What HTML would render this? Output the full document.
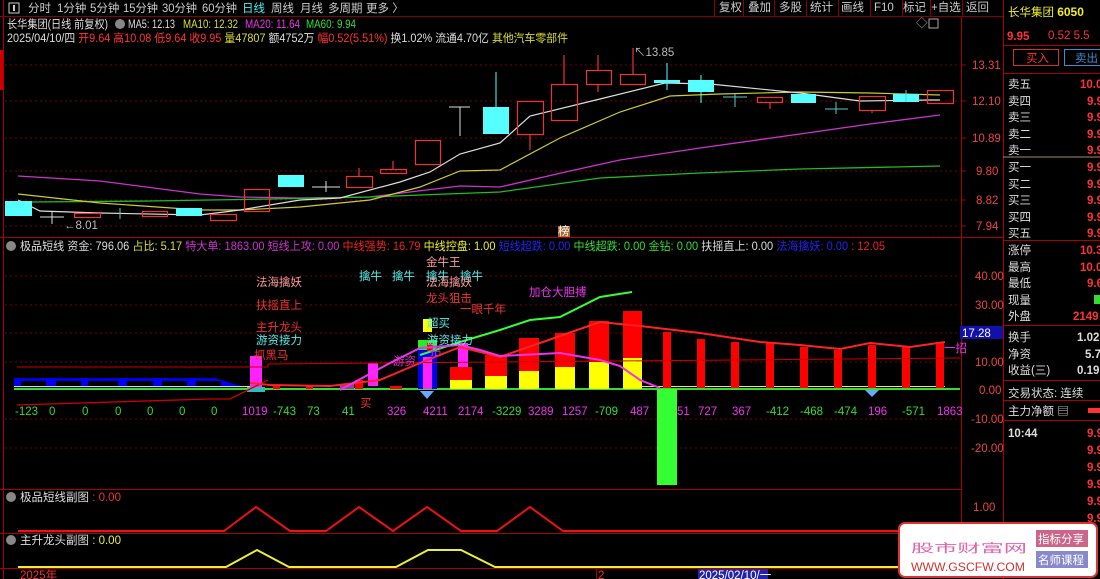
<!DOCTYPE html>
<html><head><meta charset="utf-8"><style>
html,body{margin:0;padding:0;background:#000;width:1100px;height:579px;overflow:hidden}
svg{display:block}
text{font-family:"Liberation Sans","Noto Sans CJK SC",sans-serif;font-size:11.5px}
</style></head><body>
<svg width="1100" height="579" viewBox="0 0 1100 579" xmlns="http://www.w3.org/2000/svg">
<rect width="1100" height="579" fill="#000"/>
<line x1="3.5" y1="0" x2="3.5" y2="579" stroke="#a00" />
<rect x="0" y="50" width="3" height="40" fill="#c00"/>
<line x1="0" y1="16.5" x2="1003" y2="16.5" stroke="#800"/>
<rect x="9" y="3" width="10" height="10" fill="none" stroke="#ccc"/><rect x="13" y="5" width="2" height="6" fill="#ccc"/>
<g font-size="11" fill="#ccc"><text x="28" y="12">分时</text><text x="57" y="12">1分钟</text><text x="90" y="12">5分钟</text><text x="123" y="12" textLength="35" lengthAdjust="spacingAndGlyphs">15分钟</text><text x="162" y="12" textLength="35" lengthAdjust="spacingAndGlyphs">30分钟</text><text x="202" y="12" textLength="35" lengthAdjust="spacingAndGlyphs">60分钟</text><text x="242" y="12" fill="#4ee">日线</text><text x="271" y="12">周线</text><text x="300" y="12">月线</text><text x="328" y="12">多周期</text><text x="366" y="12">更多 〉</text></g>
<g fill="#ccc" font-size="11"><text x="719" y="11">复权</text><text x="748" y="11">叠加</text><text x="779" y="11">多股</text><text x="810" y="11">统计</text><text x="841" y="11">画线</text><text x="874" y="11">F10</text><text x="903" y="11">标记</text><text x="931" y="11">+自选</text><text x="966" y="11">返回</text></g>
<g stroke="#800"><line x1="714.5" y1="0" x2="714.5" y2="16"/><line x1="743.5" y1="0" x2="743.5" y2="16"/><line x1="774.5" y1="0" x2="774.5" y2="16"/><line x1="806.5" y1="0" x2="806.5" y2="16"/><line x1="838.5" y1="0" x2="838.5" y2="16"/><line x1="870.5" y1="0" x2="870.5" y2="16"/><line x1="902.5" y1="0" x2="902.5" y2="16"/><line x1="930.5" y1="0" x2="930.5" y2="16"/><line x1="962.5" y1="0" x2="962.5" y2="16"/></g>
<text x="916" y="27" fill="#aaa" font-size="10">◇</text><rect x="929" y="19" width="9" height="9" fill="none" stroke="#aaa"/>
<text x="7" y="28" fill="#ddd" textLength="101" lengthAdjust="spacingAndGlyphs">长华集团(日线 前复权)</text><circle cx="120" cy="24" r="5" fill="#888"/>
<g font-size="11"><text x="128" y="28" fill="#ddd" textLength="47" lengthAdjust="spacingAndGlyphs">MA5: 12.13</text><text x="183" y="28" fill="#dd3" textLength="55" lengthAdjust="spacingAndGlyphs">MA10: 12.32</text><text x="245" y="28" fill="#e3e" textLength="55" lengthAdjust="spacingAndGlyphs">MA20: 11.64</text><text x="306" y="28" fill="#3d3" textLength="50" lengthAdjust="spacingAndGlyphs">MA60: 9.94</text></g>
<text x="7" y="42" fill="#ddd" textLength="561" lengthAdjust="spacingAndGlyphs">2025/04/10/四 <tspan fill="#f33">开9.64 高10.08 低9.64 收9.95</tspan> <tspan fill="#dd3">量47807</tspan> 额4752万 <tspan fill="#f33">幅0.52(5.51%)</tspan> 换1.02% 流通4.70亿 <tspan fill="#dd3">其他汽车零部件</tspan></text>
<line x1="961.5" y1="17" x2="961.5" y2="568" stroke="#a00"/>
<line x1="1003.5" y1="0" x2="1003.5" y2="579" stroke="#a00"/>
<g stroke="#700" stroke-dasharray="2,3"><line x1="5" y1="65" x2="960" y2="65"/><line x1="5" y1="101" x2="960" y2="101"/><line x1="5" y1="138" x2="960" y2="138"/><line x1="5" y1="171" x2="960" y2="171"/><line x1="5" y1="200" x2="960" y2="200"/><line x1="5" y1="226" x2="960" y2="226"/></g>
<g fill="#e44" font-size="11"><text x="972" y="69">13.31</text><text x="972" y="105">12.10</text><text x="972" y="142">10.89</text><text x="976" y="175">9.80</text><text x="976" y="204">8.82</text><text x="976" y="230">7.94</text></g>
<g stroke="#a00"><line x1="962" y1="65" x2="966" y2="65"/><line x1="962" y1="101" x2="966" y2="101"/><line x1="962" y1="138" x2="966" y2="138"/><line x1="962" y1="171" x2="966" y2="171"/><line x1="962" y1="200" x2="966" y2="200"/><line x1="962" y1="226" x2="966" y2="226"/></g>
<line x1="0" y1="237.5" x2="1003" y2="237.5" stroke="#a00"/>
<polyline fill="none" stroke="#c3c" stroke-width="1.3" points="18,176 100,181 200,194 240,197 300,198 370,197 410,192 460,186 500,187 570,171 620,160 700,148 800,134 870,124 940,115"/>
<polyline fill="none" stroke="#2b2" stroke-width="1.3" points="30,202 150,201 270,199 370,197 420,195 500,192 600,178 700,173 800,169 940,166"/>
<polyline fill="none" stroke="#cc3" stroke-width="1.2" points="18,194 100,203 200,210 240,210 300,207 370,200 420,187 460,171 500,170 560,138 620,112 670,96 720,94 800,92 870,93 940,95"/>
<polyline fill="none" stroke="#ddd" stroke-width="1.2" points="18,200 40,211 100,213 200,215 240,210 300,200 340,198 400,182 430,172 460,154 500,143 530,116 600,99 665,83 710,84 800,93 860,101 930,100 940,100"/>
<g fill="#5ff"><rect x="5" y="201" width="27" height="15"/><rect x="176" y="208" width="26" height="8"/><rect x="278" y="175" width="26" height="12"/><rect x="483" y="107" width="26" height="27"/><rect x="654" y="80" width="26" height="3"/><rect x="688" y="80" width="26" height="12"/><rect x="791" y="94" width="25" height="9"/><rect x="893" y="94" width="26" height="8"/></g>
<g stroke="#5ff"><line x1="496" y1="72" x2="496" y2="107"/><line x1="667" y1="63" x2="667" y2="90"/><line x1="701" y1="75" x2="701" y2="103"/></g>
<g fill="none" stroke="#e33" stroke-width="1.2"><rect x="74.5" y="213.5" width="26" height="4"/><rect x="142.5" y="211.5" width="25" height="5"/><rect x="210.5" y="214.5" width="26" height="6"/><rect x="244.5" y="189.5" width="25" height="22"/><rect x="346.5" y="176.5" width="26" height="11"/><rect x="380.5" y="169.5" width="26" height="4"/><rect x="415.5" y="140.5" width="25" height="24"/><rect x="517.5" y="101.5" width="26" height="33"/><rect x="551.5" y="84.5" width="26" height="36"/><rect x="586.5" y="70.5" width="25" height="14"/><rect x="620.5" y="74.5" width="25" height="10"/><rect x="757.5" y="97.5" width="25" height="5"/><rect x="859.5" y="96.5" width="26" height="14"/><rect x="927.5" y="90.5" width="26" height="13"/><line x1="359" y1="168" x2="359" y2="176"/><line x1="393" y1="161" x2="393" y2="169"/><line x1="530" y1="134" x2="530" y2="150"/><line x1="564" y1="55" x2="564" y2="84"/><line x1="598" y1="55" x2="598" y2="70"/><line x1="598" y1="84" x2="598" y2="92"/><line x1="633" y1="48" x2="633" y2="74"/><line x1="770" y1="102" x2="770" y2="109"/><line x1="872" y1="110" x2="872" y2="113"/></g>
<g stroke="#ddd"><line x1="40" y1="217" x2="64" y2="217"/><line x1="52" y1="212" x2="52" y2="224"/><line x1="312" y1="187" x2="340" y2="187"/><line x1="326" y1="181" x2="326" y2="192"/><line x1="449" y1="107" x2="470" y2="107"/><line x1="460" y1="107" x2="460" y2="136"/></g>
<g stroke="#5cc"><line x1="120" y1="208" x2="120" y2="219"/><line x1="723" y1="97" x2="747" y2="97"/><line x1="735" y1="94" x2="735" y2="107"/><line x1="825" y1="109" x2="848" y2="109"/><line x1="836" y1="102" x2="836" y2="114"/><line x1="906" y1="90" x2="906" y2="102"/></g>
<text x="64" y="229" fill="#bbb" font-size="11">←8.01</text>
<text x="634" y="56" fill="#bbb" font-size="11">↖13.85</text>
<rect x="558" y="226" width="12" height="11" fill="#a63"/><text x="558" y="235" fill="#fff" font-size="10">榜</text>
<circle cx="11" cy="246" r="5" fill="#888"/>
<text x="20" y="250" fill="#ddd" textLength="865" lengthAdjust="spacingAndGlyphs">极品短线 资金: 796.06 <tspan fill="#dd3">占比: 5.17</tspan> <tspan fill="#c3c">特大单: 1863.00 短线上攻: 0.00</tspan> <tspan fill="#e22">中线强势: 16.79</tspan> <tspan fill="#ee3">中线控盘: 1.00</tspan> <tspan fill="#22e">短线超跌: 0.00</tspan> <tspan fill="#3d3">中线超跌: 0.00 金钻: 0.00</tspan> <tspan fill="#ddd">扶摇直上: 0.00</tspan> <tspan fill="#22e">法海擒妖: 0.00</tspan> <tspan fill="#e22">: 12.05</tspan></text>
<g stroke="#700" stroke-dasharray="2,3"><line x1="5" y1="276" x2="960" y2="276"/><line x1="5" y1="305" x2="960" y2="305"/><line x1="5" y1="333" x2="960" y2="333"/><line x1="5" y1="362" x2="960" y2="362"/><line x1="5" y1="419" x2="960" y2="419"/><line x1="5" y1="448" x2="960" y2="448"/></g>
<g fill="#e44" font-size="11"><text x="975" y="280">40.00</text><text x="975" y="309">30.00</text><text x="975" y="366">10.00</text><text x="979" y="394">0.00</text><text x="971" y="423">-10.00</text><text x="971" y="452">-20.00</text></g>
<rect x="960" y="326" width="43" height="13" fill="#11a"/><text x="962" y="337" fill="#fff" font-size="11">17.28</text>
<polyline fill="#00e" stroke="none" points="14,378 215,378 250,389 14,389"/>
<g fill="#000"><rect x="21" y="381" width="25" height="6"/><rect x="56" y="381" width="25" height="6"/><rect x="88" y="381" width="30" height="6"/><rect x="127" y="381" width="26" height="6"/><rect x="162" y="381" width="25" height="6"/><rect x="196" y="381" width="25" height="6"/></g>
<line x1="14" y1="389" x2="960" y2="389" stroke="#3d3" stroke-width="2"/>
<line x1="14" y1="386.5" x2="250" y2="386.5" stroke="#ee3"/>
<line x1="640" y1="386.5" x2="945" y2="386.5" stroke="#ee3"/>
<g fill="#f00"><rect x="273" y="385" width="7" height="4"/><rect x="306" y="385" width="7" height="4"/><rect x="355" y="380" width="8" height="9"/><rect x="390" y="386" width="12" height="3"/><rect x="450" y="367" width="22" height="13"/><rect x="485" y="355" width="22" height="21"/><rect x="519" y="338" width="20" height="33"/><rect x="555" y="333" width="20" height="34"/><rect x="589" y="321" width="20" height="41"/><rect x="623" y="311" width="19" height="47"/><rect x="663" y="332" width="8" height="56"/><rect x="697" y="339" width="8" height="49"/><rect x="731" y="342" width="8" height="46"/><rect x="766" y="343" width="8" height="45"/><rect x="800" y="347" width="8" height="41"/><rect x="834" y="350" width="8" height="38"/><rect x="868" y="345" width="8" height="43"/><rect x="902" y="347" width="8" height="41"/><rect x="936" y="343" width="8" height="45"/></g>
<g fill="#ff0"><rect x="450" y="380" width="22" height="9"/><rect x="485" y="376" width="22" height="13"/><rect x="519" y="371" width="20" height="18"/><rect x="555" y="367" width="20" height="22"/><rect x="589" y="362" width="20" height="27"/><rect x="623" y="358" width="19" height="31"/><rect x="423" y="319" width="9" height="13"/></g>
<rect x="657" y="389" width="20" height="96" fill="#3f3"/>
<rect x="418" y="350" width="19" height="39" fill="#00e"/><rect x="418" y="340" width="19" height="10" fill="#2e2"/><rect x="427" y="343" width="6" height="8" fill="#e00"/>
<g fill="#f2f"><rect x="250" y="356" width="12" height="33"/><rect x="368" y="363" width="10" height="23"/><rect x="423" y="357" width="9" height="32"/><rect x="458" y="343" width="10" height="24"/></g>
<rect x="247" y="387" width="18" height="5" fill="#3bb"/><rect x="340" y="384" width="14" height="5" fill="#a3a"/>
<path d="M420,391 L434,391 L427,399 Z" fill="#6af"/><path d="M865,390 L879,390 L872,397 Z" fill="#6af"/>
<polyline fill="none" stroke="#c00" points="17,367 268,367 268,364 960,358"/>
<polyline fill="none" stroke="#c00" stroke-width="1.3" points="17,405 210,399 230,399 268,380"/>
<polyline fill="none" stroke="#f22" stroke-width="2" points="250,383 270,385 330,386 380,380 420,363 460,347 500,357 560,336 600,322 640,326 700,333 760,342 800,345 840,349 870,343 910,347 945,342"/>
<polyline fill="none" stroke="#3f3" stroke-width="2" points="420,355 460,342 500,330 530,320 560,317 600,297 632,292"/>
<polyline fill="none" stroke="#e3e" stroke-width="2" points="340,390 390,363 420,348 460,345 480,350 500,356 560,353 600,360 620,366 640,380 660,388"/>
<g font-size="11.5"><text x="256" y="286" fill="#f99">法海擒妖</text><text x="256" y="309" fill="#e33">扶摇直上</text><text x="256" y="331" fill="#e33">主升龙头</text><text x="256" y="344" fill="#5ee">游资接力</text><text x="254" y="359" fill="#e33">抓黑马</text>
<text x="359" y="280" fill="#5ee">擒牛</text><text x="392" y="280" fill="#5ee">擒牛</text><text x="426" y="266" fill="#f99">金牛王</text><text x="426" y="280" fill="#5ee">擒牛</text><text x="460" y="280" fill="#5ee">擒牛</text><text x="426" y="286" fill="#f99">法海擒妖</text><text x="426" y="302" fill="#e33">龙头狙击</text><text x="460" y="313" fill="#e33">一眼千年</text><text x="529" y="296" fill="#e3e">加仓大胆搏</text><text x="427" y="327" fill="#5ee">超买</text><text x="427" y="344" fill="#5ee">游资接力</text><text x="393" y="365" fill="#c3c">游资</text><text x="430" y="355" fill="#c3c">招</text><text x="360" y="407" fill="#e33">买</text><text x="944" y="352" fill="#e3e">一招</text></g>
<g font-size="11"><text x="15" y="415" fill="#3d3">-123</text><text x="49" y="415" fill="#3d3">0</text><text x="82" y="415" fill="#3d3">0</text><text x="115" y="415" fill="#3d3">0</text><text x="147" y="415" fill="#3d3">0</text><text x="179" y="415" fill="#3d3">0</text><text x="211" y="415" fill="#3d3">0</text><text x="242" y="415" fill="#e3e">1019</text><text x="273" y="415" fill="#3d3">-743</text><text x="307" y="415" fill="#3d3">73</text><text x="342" y="415" fill="#3d3">41</text><text x="387" y="415" fill="#e3e">326</text><text x="423" y="415" fill="#e3e">4211</text><text x="458" y="415" fill="#e3e">2174</text><text x="492" y="415" fill="#3d3">-3229</text><text x="528" y="415" fill="#e3e">3289</text><text x="562" y="415" fill="#e3e">1257</text><text x="595" y="415" fill="#3d3">-709</text><text x="630" y="415" fill="#e3e">487</text><text x="677" y="415" fill="#e3e">51</text><text x="698" y="415" fill="#e3e">727</text><text x="732" y="415" fill="#e3e">367</text><text x="766" y="415" fill="#3d3">-412</text><text x="800" y="415" fill="#3d3">-468</text><text x="834" y="415" fill="#3d3">-474</text><text x="868" y="415" fill="#e3e">196</text><text x="902" y="415" fill="#3d3">-571</text><text x="937" y="415" fill="#e3e">1863</text></g>
<line x1="0" y1="489.5" x2="962" y2="489.5" stroke="#a00"/>
<circle cx="11" cy="497" r="5" fill="#888"/><text x="20" y="501" fill="#ddd" font-size="11">极品短线副图 <tspan fill="#e33">: 0.00</tspan></text>
<text x="973" y="511" fill="#e44" font-size="11">1.00</text>
<polyline fill="none" stroke="#e11" stroke-width="2" points="18,531 224,531 256,507 290,531 326,531 359,507 393,531 427,507 461,531 497,531 530,507 563,531 960,531"/>
<line x1="0" y1="533.5" x2="962" y2="533.5" stroke="#a00"/>
<circle cx="11" cy="540" r="5" fill="#888"/><text x="20" y="544" fill="#ddd" font-size="11">主升龙头副图 <tspan fill="#ee3">: 0.00</tspan></text>
<polyline fill="none" stroke="#ee3" stroke-width="2" points="18,567 226,567 257,550 289,567 396,567 428,550 461,550 495,567 960,567"/>
<line x1="0" y1="568.5" x2="1003" y2="568.5" stroke="#a00"/>
<text x="20" y="579" fill="#e33" font-size="11">2025年</text><text x="598" y="579" fill="#e33" font-size="11">2</text>
<line x1="596.5" y1="569" x2="596.5" y2="579" stroke="#a00"/>
<rect x="698" y="569" width="70" height="10" fill="#22a"/><text x="699" y="579" fill="#fff" font-size="11">2025/02/10/一</text>
<text x="1008" y="16" fill="#ee3" font-size="14">长华集团 <tspan font-size="12" font-weight="bold">6050</tspan></text>
<text x="1007" y="40" fill="#f33" font-size="15" font-weight="bold">9.95</text><text x="1048" y="39" fill="#f33" font-size="11">0.52  5.5</text>
<line x1="1003" y1="45.5" x2="1100" y2="45.5" stroke="#a00"/>
<rect x="1013.5" y="49.5" width="45" height="16" fill="none" stroke="#c33"/><text x="1026" y="62" fill="#f33">买入</text>
<rect x="1064.5" y="49.5" width="40" height="16" fill="none" stroke="#48c"/><text x="1075" y="62" fill="#48c">卖出</text>
<line x1="1003" y1="73.5" x2="1100" y2="73.5" stroke="#a00"/>
<g fill="#ddd" font-size="13"><text x="1008" y="88">卖五</text><text x="1008" y="105">卖四</text><text x="1008" y="121">卖三</text><text x="1008" y="138">卖二</text><text x="1008" y="154">卖一</text><text x="1008" y="171">买一</text><text x="1008" y="188">买二</text><text x="1008" y="204">买三</text><text x="1008" y="221">买四</text><text x="1008" y="237">买五</text><text x="1008" y="254">涨停</text><text x="1008" y="271">最高</text><text x="1008" y="287">最低</text><text x="1008" y="304">现量</text><text x="1008" y="320">外盘</text><text x="1008" y="341">换手</text><text x="1008" y="358">净资</text><text x="1008" y="374">收益(三)</text><text x="1008" y="397">交易状态: 连续</text><text x="1008" y="415">主力净额 ▤</text></g>
<g fill="#f33" font-size="12" font-weight="bold"><text x="1080" y="88">10.0</text><text x="1087" y="105">9.9</text><text x="1087" y="121">9.9</text><text x="1087" y="138">9.9</text><text x="1087" y="154">9.9</text><text x="1087" y="171">9.9</text><text x="1087" y="188">9.9</text><text x="1087" y="204">9.9</text><text x="1087" y="221">9.9</text><text x="1087" y="237">9.9</text><text x="1080" y="254">10.3</text><text x="1080" y="271">10.0</text><text x="1087" y="287">9.6</text><text x="1073" y="320">2149</text></g>
<rect x="1094" y="295" width="6" height="9" fill="#3d3"/>
<g fill="#ddd" font-size="12" font-weight="bold"><text x="1077" y="341">1.02</text><text x="1085" y="358">5.7</text><text x="1077" y="374">0.19</text><text x="1008" y="437">10:44</text></g>
<rect x="1088" y="408" width="12" height="5" fill="#f33"/>
<g fill="#f33" font-size="12" font-weight="bold"><text x="1087" y="437">9.9</text><text x="1087" y="454">9.9</text><text x="1087" y="471">9.9</text><text x="1087" y="488">9.9</text><text x="1087" y="505">9.9</text><text x="1087" y="522">9.9</text></g>
<g stroke="#a00"><line x1="1003" y1="157" x2="1100" y2="157" stroke="#a86"/><line x1="1003" y1="240.5" x2="1100" y2="240.5"/><line x1="1003" y1="325.5" x2="1100" y2="325.5"/><line x1="1003" y1="380.5" x2="1100" y2="380.5"/><line x1="1003" y1="400.5" x2="1100" y2="400.5"/><line x1="1003" y1="420.5" x2="1100" y2="420.5"/></g>
<rect x="899" y="523" width="198" height="54" rx="6" fill="#fff" stroke="#d33" stroke-width="2"/>
<text x="911" y="552" fill="#d6a" font-size="21" textLength="116" lengthAdjust="spacingAndGlyphs">股市财富网</text>
<text x="911" y="571" fill="#c33" font-size="11" font-family="Liberation Serif,serif" textLength="114" lengthAdjust="spacingAndGlyphs">WWW.GSCFW.COM</text>
<rect x="1036" y="530" width="52" height="17" fill="#c68"/><text x="1038" y="543" fill="#fff" font-size="12">指标分享</text>
<rect x="1036" y="551" width="52" height="17" fill="#88c"/><text x="1038" y="564" fill="#fff" font-size="12">名师课程</text>
</svg>
</body></html>
